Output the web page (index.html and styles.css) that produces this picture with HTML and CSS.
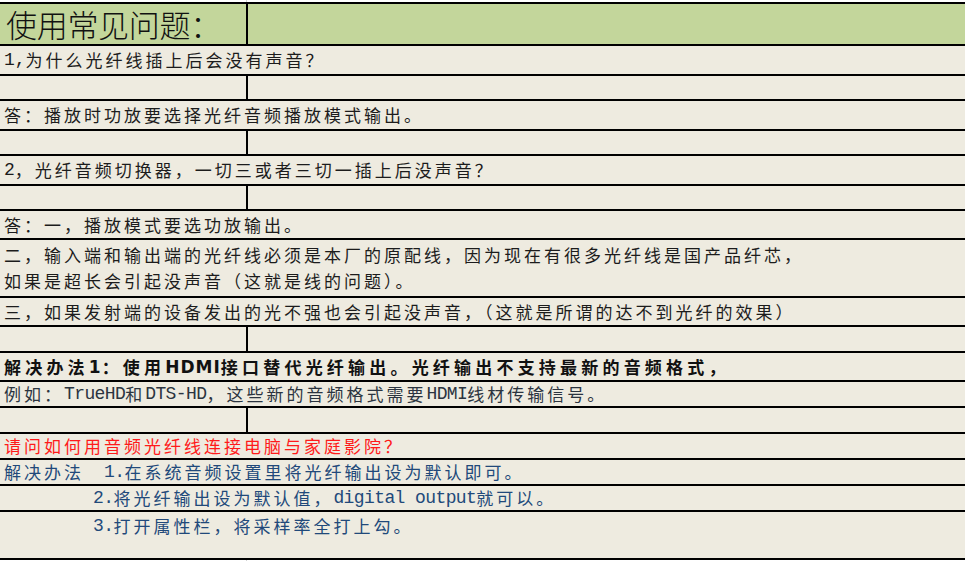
FILE: index.html
```html
<!DOCTYPE html>
<html lang="zh-CN">
<head>
<meta charset="utf-8">
<title>使用常见问题</title>
<link rel="stylesheet" href="styles.css">
</head>
<body>
<div class="sheet">
  <div class="edge"><div class="edge-a"></div></div>
  <div class="row header h42"><div class="cell-a"><span class="title">使用常见问题：</span></div><div class="cell-b"></div></div>
  <div class="row text h30"><span class="lat">1,</span>为什么光纤线插上后会没有声音？</div>
  <div class="row empty h25"><div class="cell-a"></div></div>
  <div class="row text h30">答：播放时功放要选择光纤音频播放模式输出。</div>
  <div class="row empty h25"><div class="cell-a"></div></div>
  <div class="row text h30"><span class="lat">2</span>，光纤音频切换器，一切三或者三切一插上后没声音？</div>
  <div class="row empty h25"><div class="cell-a"></div></div>
  <div class="row text h29">答：一，播放模式要选功放输出。</div>
  <div class="row text multi h58">
    <span class="line">二，输入端和输出端的光纤线必须是本厂的原配线，因为现在有很多光纤线是国产品纤芯，</span>
    <span class="line">如果是超长会引起没声音（这就是线的问题）。</span>
  </div>
  <div class="row text h29">三，如果发射端的设备发出的光不强也会引起没声音，（这就是所谓的达不到光纤的效果）</div>
  <div class="row empty h26"><div class="cell-a"></div></div>
  <div class="row text bold h29">解决办法<span class="bl">1</span>：使用<span class="bl">HDMI</span>接口替代光纤输出。光纤输出不支持最新的音频格式，</div>
  <div class="row text gray h26">例如：<span class="mono">TrueHD</span>和<span class="mono">DTS-HD</span>，这些新的音频格式需要<span class="mono">HDMI</span>线材传输信号。</div>
  <div class="row empty h26"><div class="cell-a"></div></div>
  <div class="row text red h26">请问如何用音频光纤线连接电脑与家庭影院？</div>
  <div class="row text blue h26">解决办法<span class="gap1"></span><span class="mono">1.</span>在系统音频设置里将光纤输出设为默认即可。</div>
  <div class="row text blue indent h26"><span class="mono">2.</span>将光纤输出设为默认值，<span class="mono">digital output</span>就可以。</div>
  <div class="row text blue indent top last h48"><span class="mono">3.</span>打开属性栏，将采样率全打上勾。</div>
  <div class="edge"><div class="edge-a"></div></div>
</div>
</body>
</html>
```

FILE: styles.css
```css
* { box-sizing: border-box; }
html, body { margin: 0; padding: 0; background: #ffffff; }
body { width: 965px; height: 561px; overflow: hidden; }

.sheet {
  display: flex;
  flex-direction: column;
  width: 965px;
  font-family: "Noto Sans CJK SC", sans-serif;
  font-weight: 400;
}

.edge { height: 2px; display: flex; }
.edge-a { width: 247px; border-right: 1px solid #d4d4d4; }

.row {
  display: flex;
  align-items: center;
  border-top: 2px solid #000;
  background: #eeebe0;
  white-space: nowrap;
}
.row.last { border-bottom: 2px solid #000; }

.h25 { height: 25px; }
.h26 { height: 26px; }
.h29 { height: 29px; }
.h30 { height: 30px; }
.h42 { height: 42px; }
.h58 { height: 58px; }
.h48 { height: 50px; }

.header { background: #c3d69b; align-items: stretch; }
.cell-a {
  width: 248px;
  flex: none;
  border-right: 2px solid #000;
  display: flex;
  align-items: center;
}
.cell-b { flex: 1; }
.empty { align-items: stretch; }

.title {
  font-size: 31px;
  line-height: 40px;
  font-weight: 300;
  letter-spacing: -0.3px;
  color: #111;
  padding-left: 6px;
}

.text {
  font-size: 17px;
  letter-spacing: 3px;
  line-height: 26px;
  color: #1c1c1c;
  padding-left: 4px;
}
.multi { flex-direction: column; align-items: flex-start; justify-content: center; }
.line { display: block; }

.lat, .mono {
  font-family: "Liberation Mono", monospace;
  font-size: 18px;
  letter-spacing: -0.6px;
}
.lat { letter-spacing: 0; }
.bl { font-family: "DejaVu Sans", "Liberation Sans", sans-serif; font-weight: 700; font-size: 17px; letter-spacing: 1px; }

.bold { font-weight: 700; letter-spacing: 4.2px; color: #111; }
.gray { color: #2b3440; }
.red { color: #ff1a1a; }
.blue { color: #21497a; }
.indent { padding-left: 93px; }
.gap1 { display: inline-block; width: 20px; }
.top { align-items: flex-start; padding-top: 1px; }
```
